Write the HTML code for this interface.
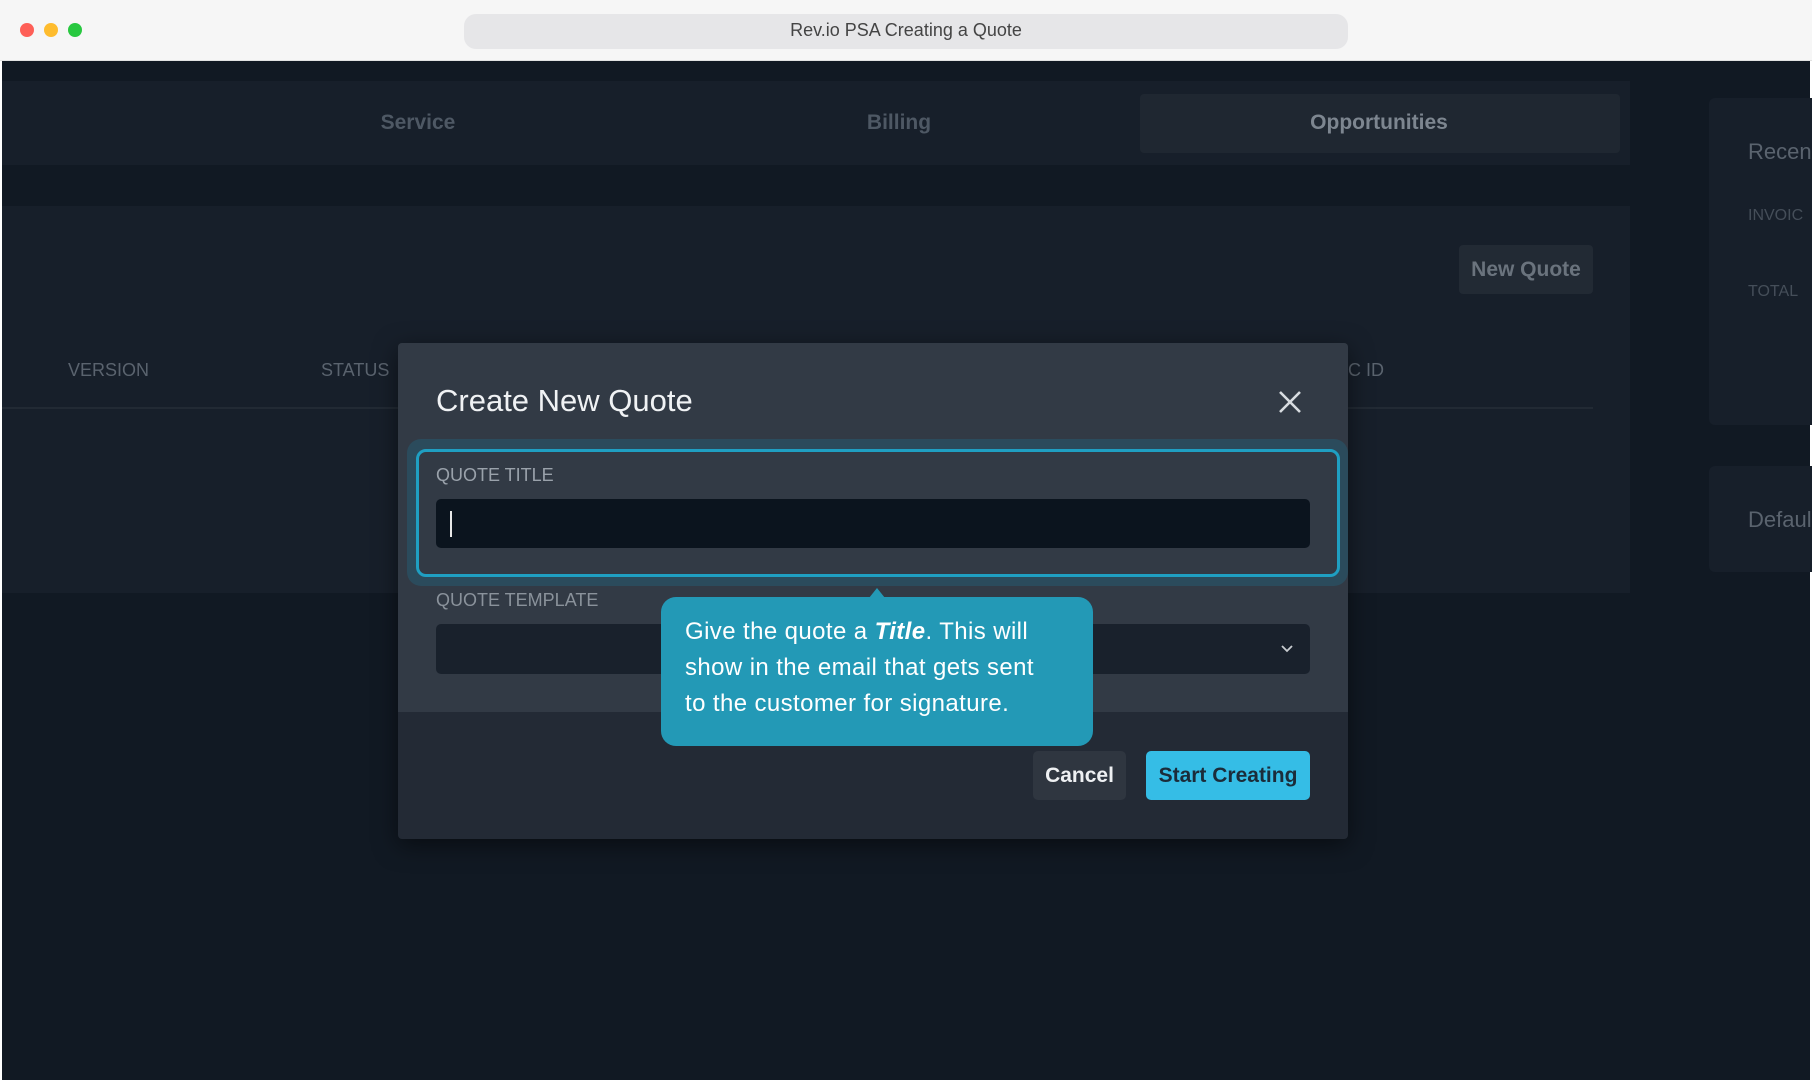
<!DOCTYPE html>
<html><head><meta charset="utf-8"><style>
*{margin:0;padding:0;box-sizing:border-box}
body{width:1812px;height:1080px;overflow:hidden;background:#fff;font-family:"Liberation Sans",sans-serif;position:relative}
.a{position:absolute}
.t{white-space:nowrap}
</style></head><body>
<div class="a" style="left:0;top:0;width:1812px;height:61px;background:#f6f6f6;border-bottom:1px solid #e2e2e2"></div>
<div class="a" style="left:20px;top:23px;width:14px;height:14px;border-radius:50%;background:#fe5f57"></div>
<div class="a" style="left:44px;top:23px;width:14px;height:14px;border-radius:50%;background:#febc2e"></div>
<div class="a" style="left:68px;top:23px;width:14px;height:14px;border-radius:50%;background:#28c840"></div>
<div class="a" style="left:464px;top:14px;width:884px;height:35px;border-radius:12px;background:#e6e6e8"></div>
<div class="a t" style="left:464px;top:20px;width:884px;text-align:center;font-size:18px;color:#444">Rev.io PSA Creating a Quote</div>

<div class="a" style="left:2px;top:61px;width:1808px;height:1019px;background:#111923"></div>
<div class="a" style="left:2px;top:81px;width:1628px;height:84px;background:#171f2a"></div>
<div class="a" style="left:1140px;top:94px;width:480px;height:59px;background:#1f2731;border-radius:4px"></div>
<div class="a t" style="left:318px;top:111px;width:200px;text-align:center;font-size:21px;font-weight:bold;color:#4e5864">Service</div>
<div class="a t" style="left:799px;top:111px;width:200px;text-align:center;font-size:21px;font-weight:bold;color:#4e5864">Billing</div>
<div class="a t" style="left:1229px;top:111px;width:300px;text-align:center;font-size:21px;font-weight:bold;color:#7d8690">Opportunities</div>

<div class="a" style="left:2px;top:206px;width:1628px;height:387px;background:#171f2a"></div>
<div class="a" style="left:1459px;top:245px;width:134px;height:49px;background:#222a34;border-radius:4px"></div>
<div class="a t" style="left:1459px;top:258px;width:134px;text-align:center;font-size:21px;font-weight:bold;color:#6a737d">New Quote</div>
<div class="a t" style="left:68px;top:360px;font-size:18px;color:#5a636e">VERSION</div>
<div class="a t" style="left:321px;top:360px;font-size:18px;color:#5a636e">STATUS</div>
<div class="a t" style="left:1348px;top:360px;font-size:18px;color:#5a636e">C ID</div>
<div class="a" style="left:2px;top:407px;width:1591px;height:2px;background:#222a34"></div>

<div class="a" style="left:1709px;top:98px;width:103px;height:327px;background:#171f2a;border-radius:6px 0 0 6px"></div>
<div class="a t" style="left:1748px;top:139px;font-size:22px;color:#5a636e">Recen</div>
<div class="a t" style="left:1748px;top:207px;font-size:16px;color:#454e59">INVOIC</div>
<div class="a t" style="left:1748px;top:283px;font-size:16px;color:#454e59">TOTAL</div>
<div class="a" style="left:1709px;top:466px;width:103px;height:106px;background:#171f2a;border-radius:6px 0 0 6px"></div>
<div class="a t" style="left:1748px;top:507px;font-size:22px;color:#5a636e">Defaul</div>

<div class="a" style="left:398px;top:343px;width:950px;height:496px;background:#232a35;border-radius:4px;box-shadow:0 6px 24px rgba(0,0,0,.5);overflow:hidden">
<div style="position:absolute;left:0;top:0;width:950px;height:369px;background:#323a45"></div>
</div>
<div class="a t" style="left:436px;top:383px;font-size:31px;color:#f0f2f4">Create New Quote</div>
<svg class="a" style="left:1278px;top:390px" width="24" height="24" viewBox="0 0 24 24"><path d="M2 2L22 22M22 2L2 22" stroke="#d8dce0" stroke-width="2.6"/></svg>

<div class="a" style="left:407px;top:439px;width:941px;height:147px;border-radius:14px;background:#2b4b5c"></div>
<div class="a" style="left:416px;top:449px;width:924px;height:128px;border-radius:10px;border:3px solid #1f9fc2;background:#323a45"></div>
<div class="a t" style="left:436px;top:465px;font-size:18px;color:#9aa2ab">QUOTE TITLE</div>
<div class="a" style="left:436px;top:499px;width:874px;height:49px;background:#0b141e;border-radius:5px"></div>
<div class="a" style="left:450px;top:511px;width:2px;height:26px;background:#e8e8e8"></div>
<div class="a t" style="left:436px;top:590px;font-size:18px;color:#8a929b">QUOTE TEMPLATE</div>
<div class="a" style="left:436px;top:624px;width:874px;height:50px;background:#19212c;border-radius:5px"></div>
<svg class="a" style="left:1280px;top:644px" width="14" height="10" viewBox="0 0 14 10"><path d="M2 2L7 7L12 2" stroke="#c8ccd0" stroke-width="1.8" fill="none"/></svg>

<div class="a" style="left:661px;top:597px;width:432px;height:149px;background:#2399b6;border-radius:15px"></div>
<div class="a" style="left:869px;top:588px;width:0;height:0;border-left:8px solid transparent;border-right:8px solid transparent;border-bottom:10px solid #2399b6"></div>
<div class="a" style="left:685px;top:614px;font-size:24px;line-height:36px;color:#fff;white-space:nowrap;letter-spacing:0.4px">Give the quote a <b><i>Title</i></b>. This will<br>show in the email that gets sent<br>to the customer for signature.</div>

<div class="a" style="left:1033px;top:751px;width:93px;height:49px;background:#2f3640;border-radius:5px"></div>
<div class="a t" style="left:1033px;top:764px;width:93px;text-align:center;font-size:21px;font-weight:bold;color:#eef0f2">Cancel</div>
<div class="a" style="left:1146px;top:751px;width:164px;height:49px;background:#35bde6;border-radius:5px"></div>
<div class="a t" style="left:1146px;top:764px;width:164px;text-align:center;font-size:21px;font-weight:bold;color:#1b2c3a">Start Creating</div>
</body></html>
